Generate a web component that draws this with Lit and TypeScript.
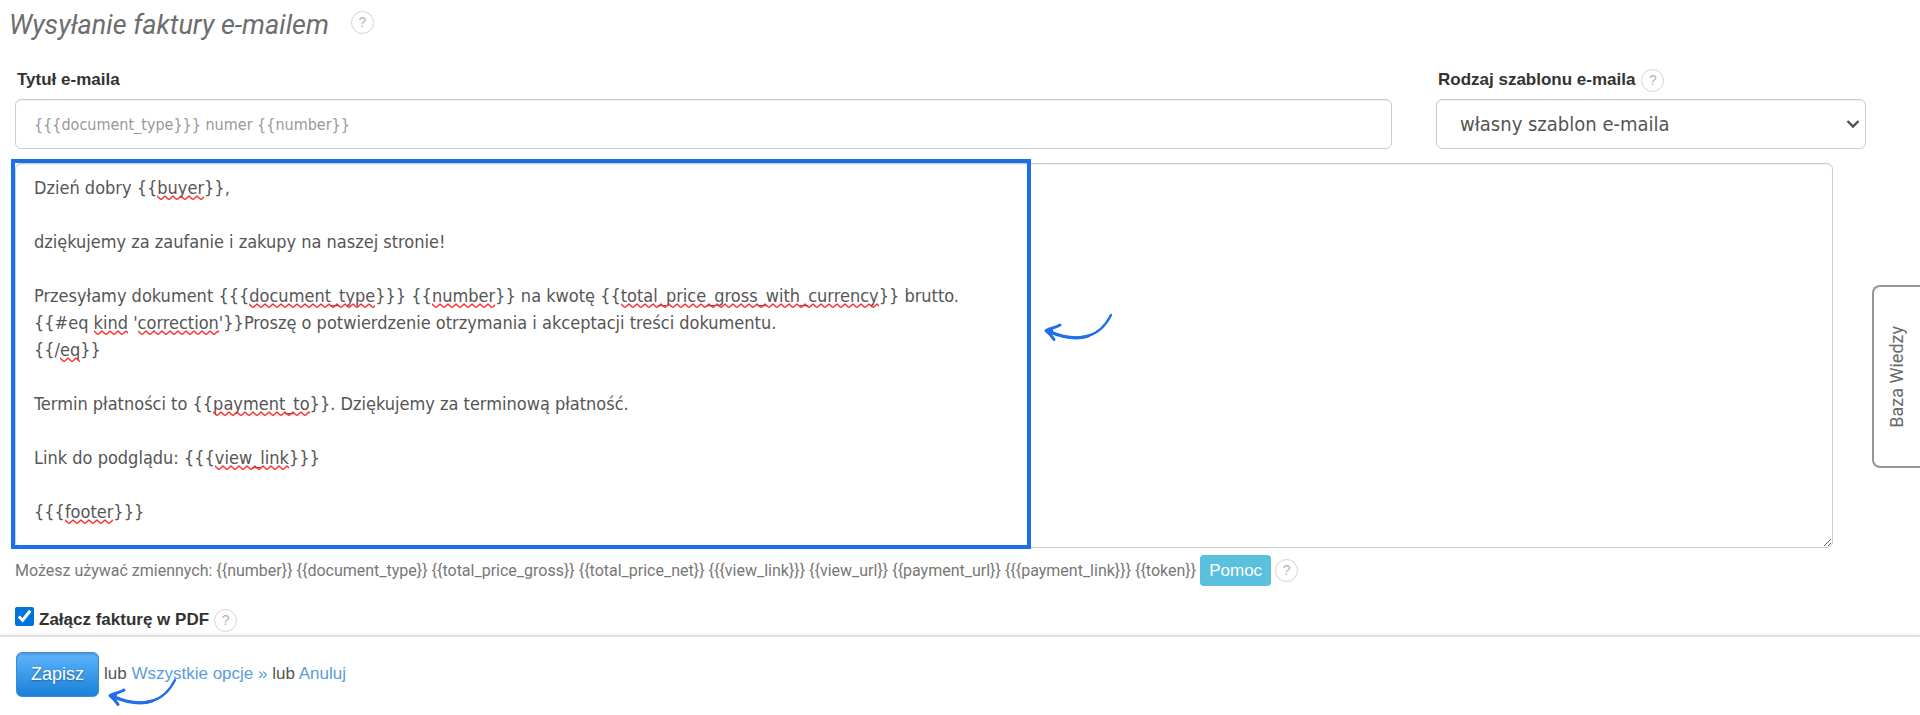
import { LitElement, html, css, svg } from "lit";
import { customElement, state } from "lit/decorators.js";

interface Mark {
  left: number;
  top: number;
  width: number;
}

const BODY_FONT = '18px "DejaVu Sans Condensed"';
const LINE_HEIGHT = 27;

const MESSAGE = `Dzień dobry {{buyer}},

dziękujemy za zaufanie i zakupy na naszej stronie!

Przesyłamy dokument {{{document_type}}} {{number}} na kwotę {{total_price_gross_with_currency}} brutto.
{{#eq kind 'correction'}}Proszę o potwierdzenie otrzymania i akceptacji treści dokumentu.
{{/eq}}

Termin płatności to {{payment_to}}. Dziękujemy za terminową płatność.

Link do podglądu: {{{view_link}}}

{{{footer}}}`;

// [line index, word] pairs flagged by the spell checker
const MISSPELLED: [number, string][] = [
  [0, "buyer"],
  [4, "document_type"],
  [4, "number"],
  [4, "total_price_gross_with_currency"],
  [5, "kind"],
  [5, "correction"],
  [6, "eq"],
  [8, "payment_to"],
  [10, "view_link"],
  [12, "footer"],
];

const arrow = svg`
  <path d="M68 3 C63 13 55 21 45 24 C33 28 19 25 5 19" stroke-width="2.4" />
  <path d="M45 24 C34 27.5 20 25.5 6 19.5" stroke-width="3.2" />
  <path d="M17 13 C13 15.500 7 16.500 3 18.500 C6 21 9 24 11 27.500" stroke-width="3" />
  <path d="M3 19 L9 17.500 L9 21.500 Z" fill="#1f70ea" stroke-width="2" />`;

@customElement("help-badge")
class HelpBadge extends LitElement {
  static styles = css`
    :host {
      display: inline-flex;
      flex: none;
    }
    .badge {
      box-sizing: border-box;
      width: 23px;
      height: 23px;
      padding: 0;
      border: 1px solid #d4d4d4;
      border-radius: 50%;
      background: #fff;
      color: #b4b4b4;
      font: 14px/21px "Liberation Sans", sans-serif;
      text-align: center;
    }
  `;

  render() {
    return html`<button class="badge" type="button" title="Pomoc">?</button>`;
  }
}

@customElement("app-root")
class AppRoot extends LitElement {
  static styles = css`
    :host {
      display: block;
      position: relative;
      min-height: 100vh;
      background: #fff;
      color: #555;
      font: 17px/24px "Liberation Sans", Arial, sans-serif;
      overflow: hidden;
    }
    .form {
      padding: 4px 54px 0 15px;
    }
    .heading {
      display: flex;
      align-items: center;
      gap: 22px;
      margin: 0 0 27px -6px;
      height: 37px;
    }
    h1 {
      margin: 0;
      padding-top: 4px;
      color: #6d6d6d;
      font: italic 27px/32px Roboto, sans-serif;
    }
    .fields {
      display: grid;
      grid-template-columns: 1377fr 430fr;
      column-gap: 44px;
    }
    .caption {
      display: flex;
      align-items: center;
      gap: 6px;
      height: 24px;
      margin-bottom: 7px;
      padding-left: 2px;
      color: #333;
      font-weight: bold;
    }
    .control {
      box-sizing: border-box;
      display: block;
      width: 100%;
      border: 1px solid #ccc;
      border-radius: 6px;
      background-color: #fff;
      box-shadow: inset 0 1px 1px rgba(0, 0, 0, 0.08);
      color: #555;
      outline: none;
    }
    .subject {
      height: 50px;
      padding: 0 18px;
      font: 16px/24px "DejaVu Sans Condensed", sans-serif;
    }
    .subject::placeholder {
      color: #999;
    }
    .template {
      height: 50px;
      padding: 0 23px;
      appearance: none;
      background: #fff
        url("data:image/svg+xml,%3Csvg xmlns='http://www.w3.org/2000/svg' width='14' height='10'%3E%3Cpath d='M1.5 2 7 7.5 12.5 2' fill='none' stroke='%23505050' stroke-width='2.4'/%3E%3C/svg%3E")
        no-repeat right 5px center;
      font: 20px/28px "DejaVu Sans Condensed", sans-serif;
    }
    .editor {
      position: relative;
      margin: 14px 33px 0 0;
    }
    .message {
      padding: 10px 18px 22px;
      font: 18px/27px "DejaVu Sans Condensed", sans-serif;
      resize: both;
    }
    .squiggle {
      position: absolute;
      height: 5px;
      background: url("data:image/svg+xml,%3Csvg xmlns='http://www.w3.org/2000/svg' width='8' height='5'%3E%3Cpath d='M-1 0 0 1 3.2 4Q4 4.6 4.8 4L8 1 9 0' fill='none' stroke='%23ff2d2d' stroke-width='1.4'/%3E%3C/svg%3E")
        repeat-x;
      pointer-events: none;
    }
    .frame {
      position: absolute;
      box-sizing: border-box;
      top: -4px;
      bottom: -1px;
      left: -4px;
      width: 56.1%;
      border: 4px solid #1c6fe8;
      pointer-events: none;
    }
    .arrow {
      position: absolute;
      width: 70px;
      height: 30px;
      fill: none;
      stroke: #1f70ea;
      stroke-linecap: round;
      stroke-linejoin: round;
      pointer-events: none;
    }
    .frame .arrow {
      left: calc(100% + 16px);
      top: 149px;
    }
    .hint {
      display: flex;
      align-items: center;
      gap: 4px;
      margin-top: 7px;
      color: #777;
      font: 16px/24px Roboto, sans-serif;
    }
    .info {
      box-sizing: border-box;
      height: 31px;
      padding: 0 9px;
      border: 0;
      border-radius: 4px;
      background: #5bc0de;
      color: #fff;
      font: 17px/31px "Liberation Sans", sans-serif;
    }
    .attach {
      display: flex;
      align-items: center;
      gap: 5px;
      height: 24px;
      margin: 22px 0 3px;
      color: #333;
      font-weight: bold;
    }
    .attach input {
      width: 19px;
      height: 19px;
      margin: 0 0 8px;
      accent-color: #0075d9;
    }
    .actions {
      display: flex;
      align-items: center;
      gap: 5px;
      padding: 15px 16px;
      border-top: 2px solid #e2e2e2;
      box-shadow: 0 -2px 3px rgba(0, 0, 0, 0.04);
    }
    .links {
      position: relative;
      padding-bottom: 2px;
    }
    .links .arrow {
      left: 3px;
      top: 15px;
    }
    a {
      color: #5b9dd9;
      text-decoration: none;
    }
    .save {
      box-sizing: border-box;
      height: 45px;
      padding: 0 14px;
      border: 1px solid #3b8fd0;
      border-radius: 6px;
      background: linear-gradient(#5fb4fd, #1a80da);
      box-shadow: inset 0 2px 1px rgba(60, 120, 170, 0.35);
      color: #fff;
      font: 18px/43px "Liberation Sans", sans-serif;
      text-shadow: 0 1px 2px rgba(0, 0, 0, 0.35);
    }
    .knowledge {
      position: absolute;
      box-sizing: border-box;
      top: 285px;
      right: 0;
      display: flex;
      align-items: center;
      justify-content: center;
      width: 48px;
      height: 183px;
      padding: 0;
      border: 2px solid #969696;
      border-right: 0;
      border-radius: 8px 0 0 8px;
      background: #fff;
      color: #6a6a6a;
      font: 18px/24px Roboto, sans-serif;
    }
    .knowledge span {
      writing-mode: vertical-rl;
      rotate: 180deg;
    }
  `;

  @state() private marks: Mark[] = [];

  firstUpdated() {
    const ctx = document.createElement("canvas").getContext("2d")!;
    ctx.font = BODY_FONT;
    const lines = MESSAGE.split("\n");
    this.marks = MISSPELLED.map(([line, word]) => {
      const before = lines[line].slice(0, lines[line].indexOf(word));
      return {
        left: 19 + ctx.measureText(before).width,
        top: 11 + line * LINE_HEIGHT + 21,
        width: ctx.measureText(word).width,
      };
    });
  }

  render() {
    return html`
      <form class="form" @submit=${(e: Event) => e.preventDefault()}>
        <header class="heading">
          <h1>Wysyłanie faktury e-mailem</h1>
          <help-badge></help-badge>
        </header>
        <div class="fields">
          <div>
            <div class="caption"><label for="subject">Tytuł e-maila</label></div>
            <input id="subject" class="control subject" placeholder="{{{document_type}}} numer {{number}}" />
          </div>
          <div>
            <div class="caption">
              <label for="template">Rodzaj szablonu e-maila</label>
              <help-badge></help-badge>
            </div>
            <select id="template" class="control template">
              <option>własny szablon e-maila</option>
            </select>
          </div>
        </div>
        <div class="editor">
          <textarea class="control message" rows="13" spellcheck="false" aria-label="Treść e-maila" .value=${MESSAGE}></textarea>
          ${this.marks.map(
            (m) => html`<i class="squiggle" style="left:${m.left}px;top:${m.top}px;width:${m.width}px"></i>`
          )}
          <div class="frame"><svg class="arrow" viewBox="0 0 70 30">${arrow}</svg></div>
        </div>
        <div class="hint">
          <span>Możesz używać zmiennych: {{number}} {{document_type}} {{total_price_gross}} {{total_price_net}} {{{view_link}}} {{view_url}} {{payment_url}} {{{payment_link}}} {{token}}</span>
          <button class="info" type="button">Pomoc</button>
          <help-badge></help-badge>
        </div>
        <div class="attach">
          <input id="pdf" type="checkbox" checked />
          <label for="pdf">Załącz fakturę w PDF</label>
          <help-badge></help-badge>
        </div>
      </form>
      <footer class="actions">
        <button class="save" type="button">Zapisz</button>
        <div class="links">
          lub <a href="#opcje">Wszystkie opcje »</a> lub <a href="#anuluj">Anuluj</a>
          <svg class="arrow" viewBox="0 0 70 30">${arrow}</svg>
        </div>
      </footer>
      <button class="knowledge" type="button"><span>Baza Wiedzy</span></button>
    `;
  }
}
